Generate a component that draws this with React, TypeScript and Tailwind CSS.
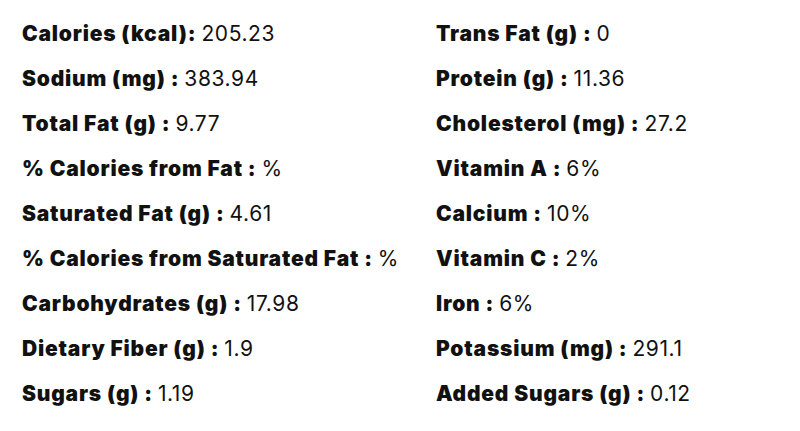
import React from "react";

const left: [string, string][] = [
  ["Calories (kcal):", "205.23"],
  ["Sodium (mg) :", "383.94"],
  ["Total Fat (g) :", "9.77"],
  ["% Calories from Fat :", "%"],
  ["Saturated Fat (g) :", "4.61"],
  ["% Calories from Saturated Fat :", "%"],
  ["Carbohydrates (g) :", "17.98"],
  ["Dietary Fiber (g) :", "1.9"],
  ["Sugars (g) :", "1.19"],
];

const right: [string, string][] = [
  ["Trans Fat (g) :", "0"],
  ["Protein (g) :", "11.36"],
  ["Cholesterol (mg) :", "27.2"],
  ["Vitamin A :", "6%"],
  ["Calcium :", "10%"],
  ["Vitamin C :", "2%"],
  ["Iron :", "6%"],
  ["Potassium (mg) :", "291.1"],
  ["Added Sugars (g) :", "0.12"],
];

function Row({ label, value }: { label: string; value: string }) {
  return (
    <div className="h-[45px] flex items-center whitespace-nowrap text-[21px] text-[#111]">
      <span className="font-black tracking-[0.8px]">{label}</span>
      <span className="font-normal tracking-[0.6px] ml-[5px]">{value}</span>
    </div>
  );
}

export default function App() {
  return (
    <div
      className="w-[800px] h-[431px] bg-white pt-[11px] pl-[22px] grid grid-cols-[414px_1fr]"
      style={{ fontFamily: "Inter, 'Noto Sans', sans-serif" }}
    >
      <div className="flex flex-col">
        {left.map(([l, v]) => (
          <Row key={l} label={l} value={v} />
        ))}
      </div>
      <div className="flex flex-col">
        {right.map(([l, v]) => (
          <Row key={l} label={l} value={v} />
        ))}
      </div>
    </div>
  );
}
